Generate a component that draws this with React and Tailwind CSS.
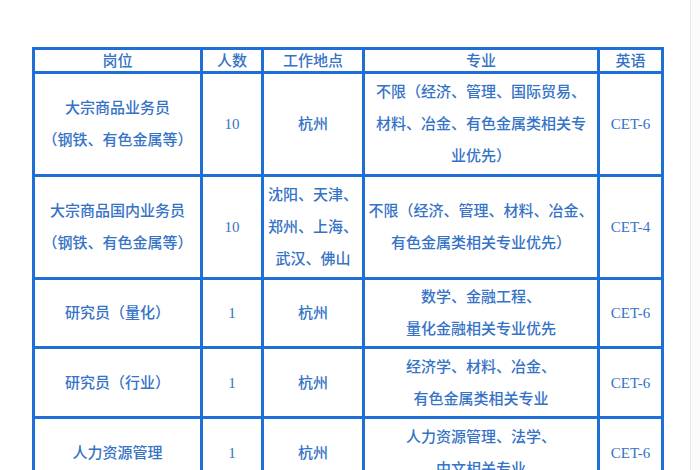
import React from 'react';

const rows = [
  {
    h: 'h-[103px]',
    post: ['大宗商品业务员', '（钢铁、有色金属等）'],
    num: '10',
    place: ['杭州'],
    major: ['不限（经济、管理、国际贸易、', '材料、冶金、有色金属类相关专', '业优先）'],
    eng: 'CET-6',
  },
  {
    h: 'h-[103px]',
    post: ['大宗商品国内业务员', '（钢铁、有色金属等）'],
    num: '10',
    place: ['沈阳、天津、', '郑州、上海、', '武汉、佛山'],
    major: ['不限（经济、管理、材料、冶金、', '有色金属类相关专业优先）'],
    eng: 'CET-4',
  },
  {
    h: 'h-[69px]',
    post: ['研究员（量化）'],
    num: '1',
    place: ['杭州'],
    major: ['数学、金融工程、', '量化金融相关专业优先'],
    eng: 'CET-6',
  },
  {
    h: 'h-[70px]',
    post: ['研究员（行业）'],
    num: '1',
    place: ['杭州'],
    major: ['经济学、材料、冶金、', '有色金属类相关专业'],
    eng: 'CET-6',
  },
  {
    h: 'h-[70px]',
    post: ['人力资源管理'],
    num: '1',
    place: ['杭州'],
    major: ['人力资源管理、法学、', '中文相关专业'],
    eng: 'CET-6',
  },
];

// cell text split into lines, like the word table it came from
const Lines = ({ lines }) =>
  lines.map((l, i) => (
    <React.Fragment key={i}>
      {i > 0 && <br />}
      {l}
    </React.Fragment>
  ));

const cell = 'border-[3px] border-[#1f6fd8] text-center align-middle p-0';

export default function App() {
  return (
    <div className="relative w-[700px] h-[470px] overflow-hidden bg-white font-['Liberation_Serif','Noto_Sans_CJK_SC',serif] text-[15px] font-medium text-[#3573c6]">
      <div className="absolute top-0 bottom-0 left-[690px] right-0 border-l border-[#e6e6e6] bg-[#fbfbfb]" />
      <table className="table-fixed border-collapse ml-[32px] mt-[47px] w-[629px]">
        <colgroup>
          <col className="w-[168px]" />
          <col className="w-[61px]" />
          <col className="w-[101px]" />
          <col className="w-[235px]" />
          <col className="w-[64px]" />
        </colgroup>
        <thead>
          <tr className="h-[24px] leading-[20px]">
            <th className={`${cell} font-medium`}>岗位</th>
            <th className={`${cell} font-medium`}>人数</th>
            <th className={`${cell} font-medium`}>工作地点</th>
            <th className={`${cell} font-medium`}>专业</th>
            <th className={`${cell} font-medium`}>英语</th>
          </tr>
        </thead>
        <tbody className="leading-[32px]">
          {rows.map((r, i) => (
            <tr key={i} className={r.h}>
              <td className={cell}>
                <Lines lines={r.post} />
              </td>
              <td className={cell}>{r.num}</td>
              <td className={cell}>
                <Lines lines={r.place} />
              </td>
              <td className={cell}>
                <Lines lines={r.major} />
              </td>
              <td className={cell}>{r.eng}</td>
            </tr>
          ))}
        </tbody>
      </table>
    </div>
  );
}
